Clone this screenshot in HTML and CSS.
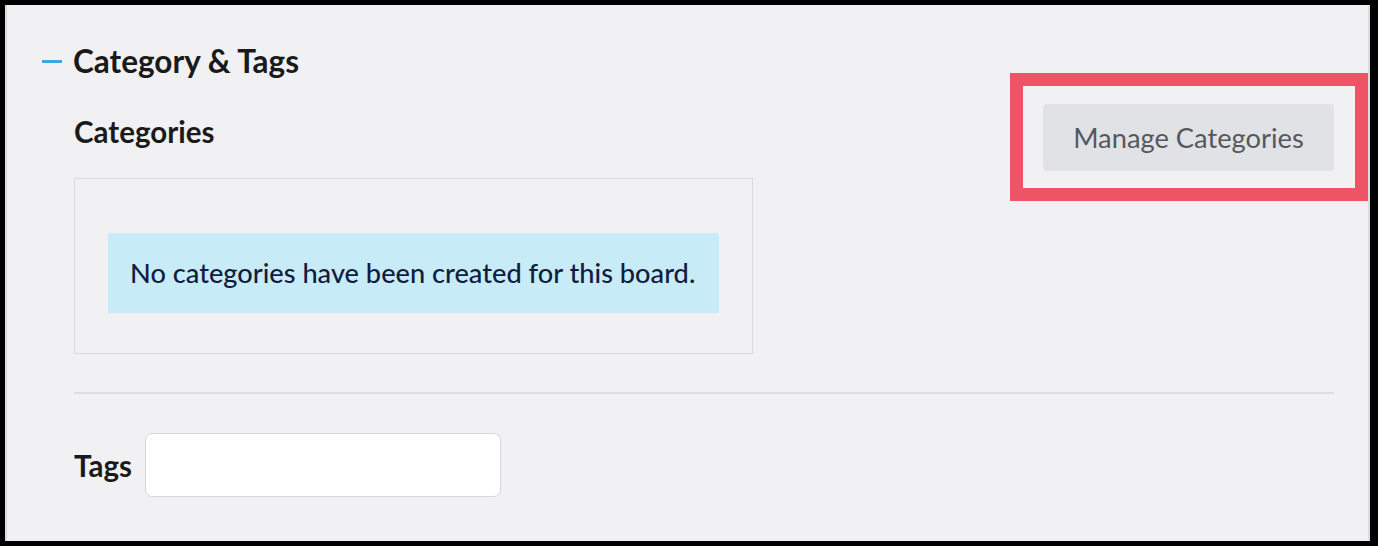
FILE: index.html
```html
<!DOCTYPE html>
<html lang="en">
<head>
<meta charset="utf-8">
<title>Category &amp; Tags</title>
<link rel="stylesheet" href="styles.css">
</head>
<body>
<div class="panel">
  <div class="section-title">
    <span class="dash"></span>
    <h2 class="title-text">Category &amp; Tags</h2>
  </div>
  <div class="section-body">
    <div class="cat-row">
      <div class="cat-left">
        <h3 class="field-label">Categories</h3>
        <div class="cat-box">
          <div class="alert-info">No categories have been created for this board.</div>
        </div>
      </div>
      <div class="cat-right">
        <button class="btn-manage" type="button">Manage Categories</button>
        <span class="highlight"></span>
      </div>
    </div>
    <hr class="divider">
    <div class="tags-row">
      <label class="tags-label" for="tags">Tags</label>
      <input class="tags-input" id="tags" type="text">
    </div>
  </div>
</div>
</body>
</html>
```
FILE: styles.css
```css
* { box-sizing: border-box; }
html, body { margin: 0; padding: 0; }
body {
  background: #000;
  height: 546px;
  overflow: hidden;
  font-family: Lato, "Open Sans", "Liberation Sans", sans-serif;
  padding: 5px 8px 5px 5px;
}
.panel {
  height: 536px;
  background: #f1f1f3;
  border-left: 2px solid #dcdce0;
  border-right: 2px solid #dcdce0;
}
.section-title {
  display: flex;
  align-items: center;
  padding: 38px 0 0 35px;
}
.dash {
  width: 20px;
  height: 3px;
  background: #3ea6de;
  margin-right: 11px;
}
.title-text {
  margin: 0;
  font-size: 31.5px;
  line-height: 36px;
  font-weight: 700;
  color: #1a1a1a;
}
.section-body {
  padding: 2px 34px 0 67px;
}
.cat-row {
  display: flex;
  justify-content: space-between;
  align-items: flex-start;
}
.field-label {
  margin: 34px 0 0 0;
  font-size: 29.5px;
  line-height: 34px;
  font-weight: 700;
  color: #1a1a1a;
}
.cat-box {
  margin-top: 29px;
  width: 679px;
  height: 176px;
  border: 1px solid #d9d9dd;
  padding: 54px 33px 0 33px;
}
.alert-info {
  display: inline-block;
  white-space: nowrap;
  background: #c8ebf8;
  color: #111d40;
  font-size: 27.2px;
  font-weight: 500;
  line-height: 80px;
  height: 80px;
  width: 611px;
  padding: 0 0 0 22px;
}
.cat-right {
  position: relative;
  margin-top: 23px;
}
.btn-manage {
  display: block;
  width: 291px;
  height: 67px;
  border: none;
  border-radius: 4px;
  background: #e1e2e6;
  color: #55585d;
  font-family: Lato, "Open Sans", "Liberation Sans", sans-serif;
  font-size: 27.3px;
  padding: 0;
}
.highlight {
  position: absolute;
  left: -33px;
  top: -31px;
  right: -34px;
  bottom: -30px;
  border: 13px solid #ef5366;
  pointer-events: none;
}
.divider {
  margin: 38px 0 0 0;
  border: none;
  border-top: 2px solid #dedee2;
  height: 0;
}
.tags-row {
  display: flex;
  align-items: center;
  margin-top: 39px;
}
.tags-label {
  font-size: 29.5px;
  font-weight: 700;
  color: #1a1a1a;
  margin-right: 13px;
}
.tags-input {
  width: 356px;
  height: 64px;
  border: 1px solid #d6d6da;
  border-radius: 7px;
  background: #fff;
  outline: none;
}
```
